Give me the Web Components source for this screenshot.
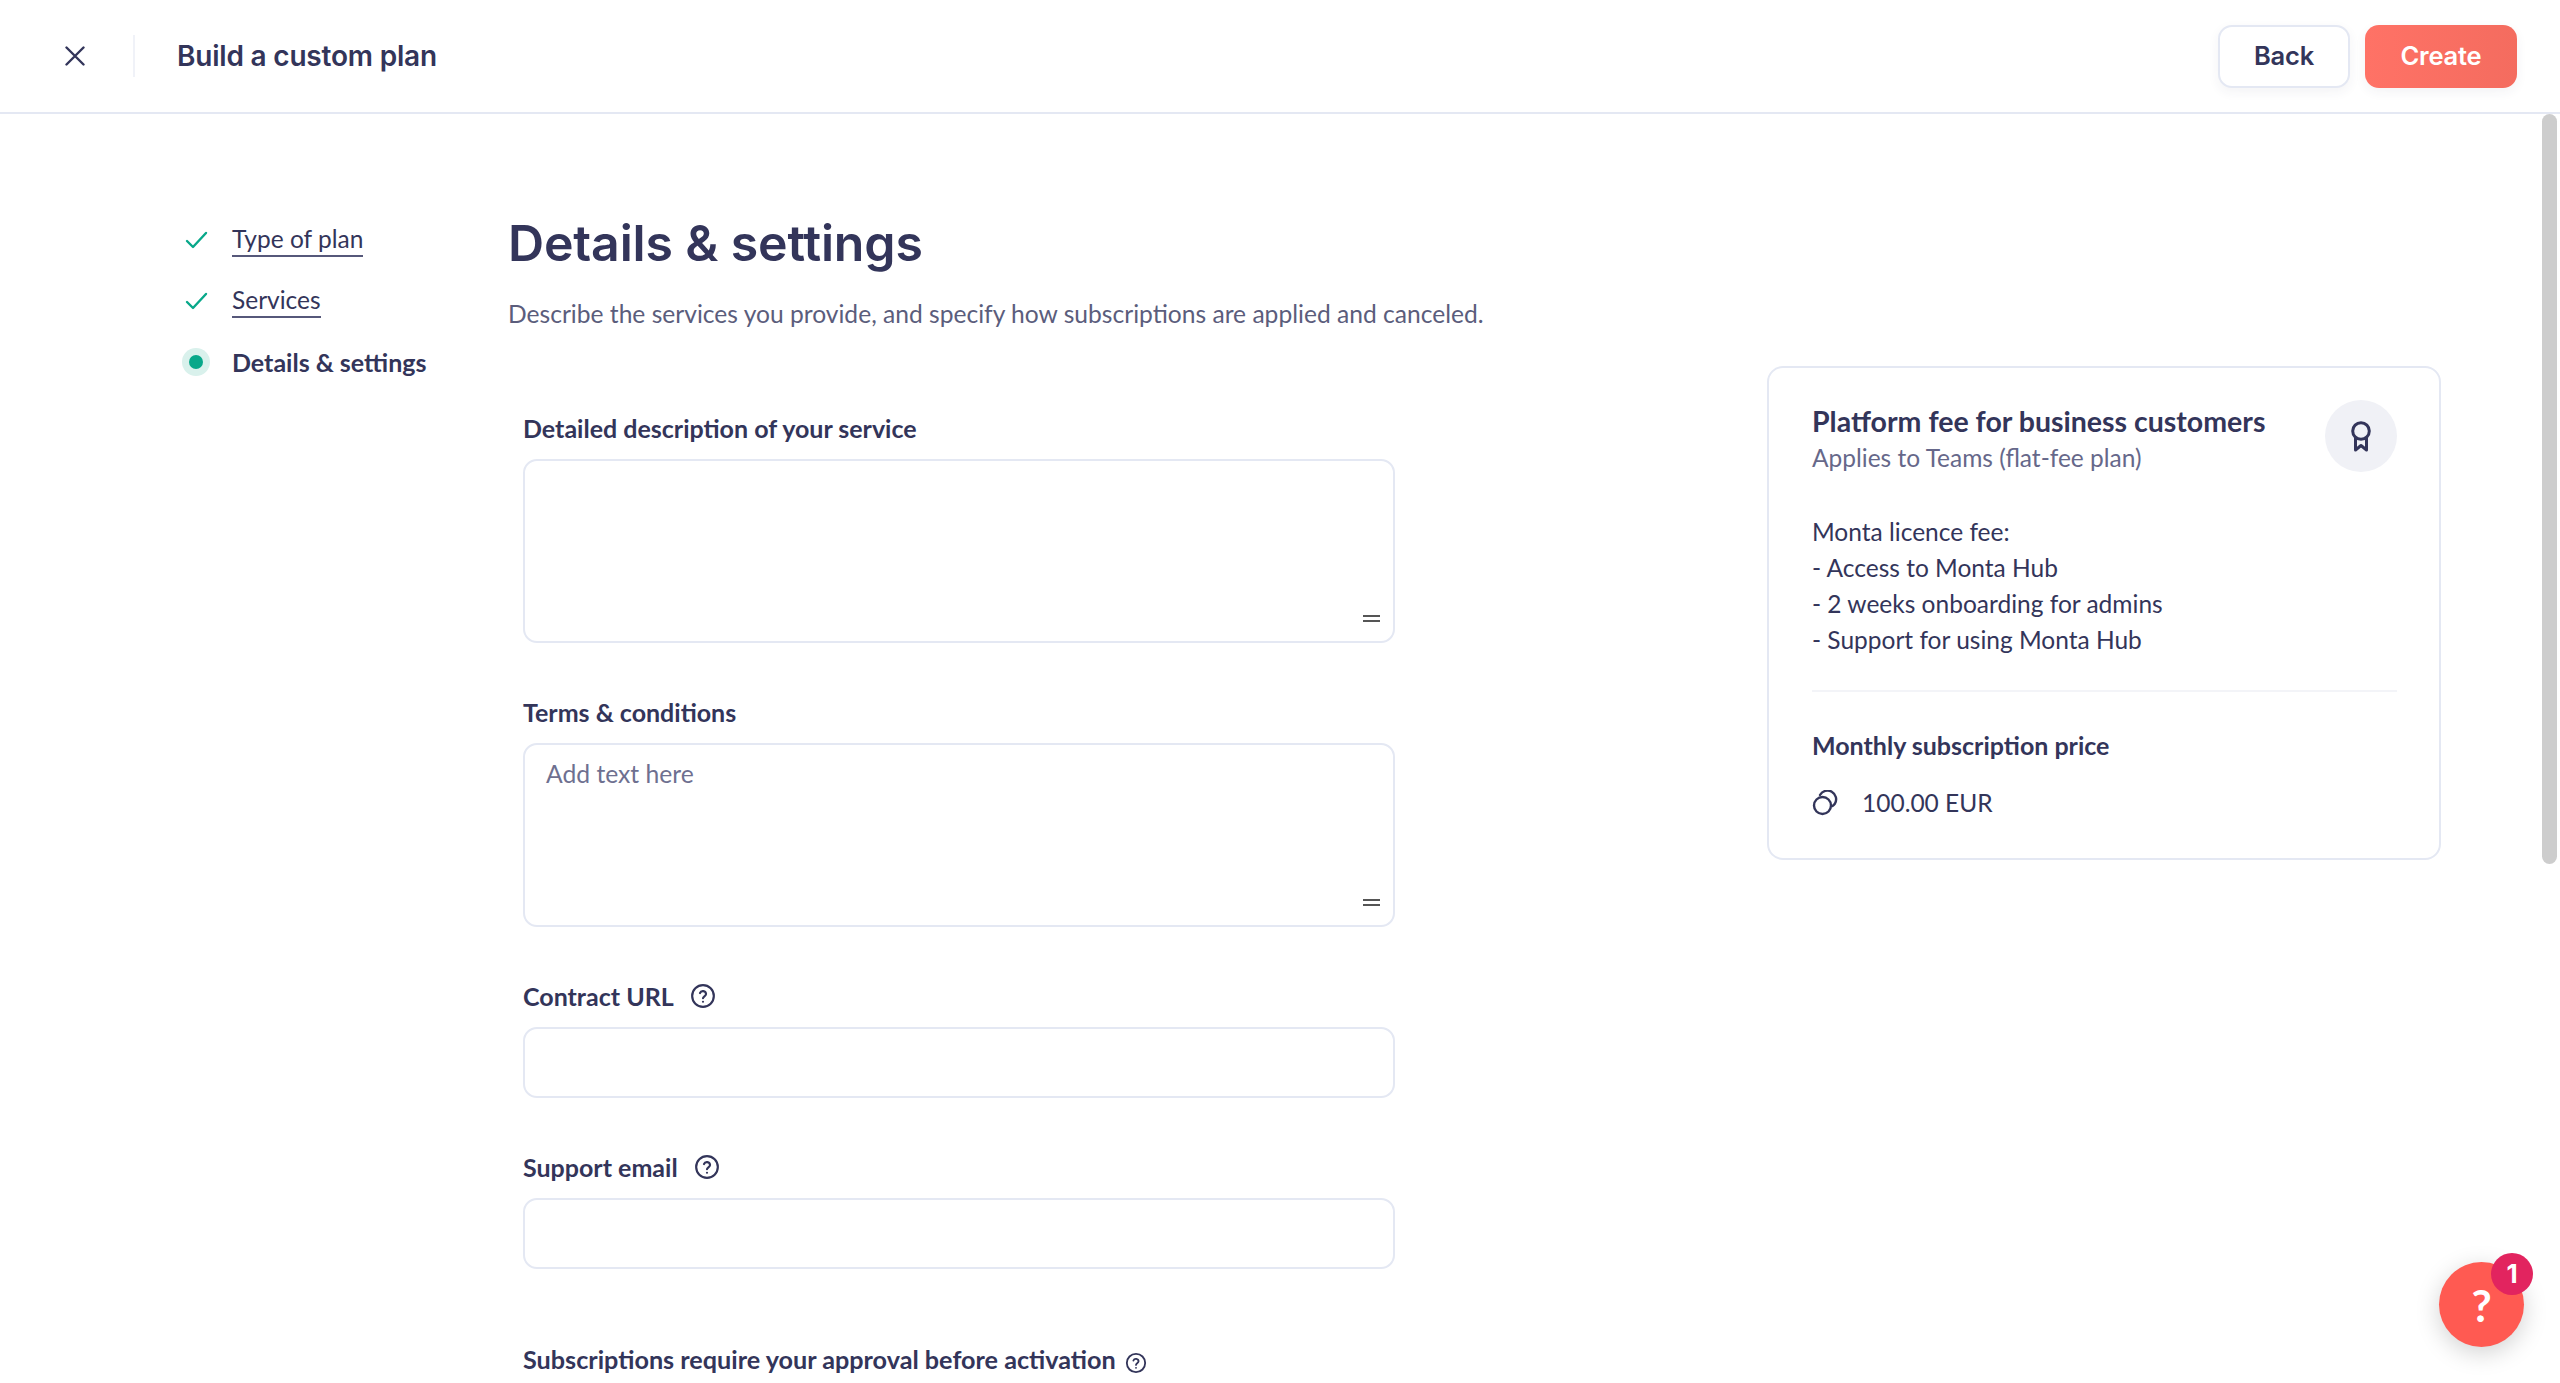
<!DOCTYPE html>
<html lang="en"><head><meta charset="utf-8"><title>Build a custom plan</title>
<style>
html,body{margin:0;height:100%;overflow:hidden;background:#fff}
body{font-family:Lato,"Liberation Sans",sans-serif;color:#33355a}
</style></head><body>
<plan-app></plan-app>
<script>
const Q='<svg viewBox="0 0 24 24" width="100%" height="100%" fill="none" stroke="currentColor" stroke-width="2" stroke-linecap="round" stroke-linejoin="round"><circle cx="12" cy="12" r="10"/><path d="M9.2 9.3a2.9 2.9 0 0 1 5.6.9c0 1.9-2.8 2.3-2.8 3.9"/><path d="M12 17.3h.01"/></svg>';
function def(name,css,html){
  customElements.define(name,class extends HTMLElement{
    constructor(){super();const r=this.attachShadow({mode:'open'});r.innerHTML='<style>'+css+'</style>'+(typeof html==='function'?html(this):html);}
  });
}
def('top-bar',`
:host{display:flex;align-items:center;height:112px;border-bottom:2px solid #e4e8f3;padding:0 43px 0 0;box-sizing:content-box;flex:none;background:#fff}
.x{width:135px;height:42px;display:flex;align-items:center;border-right:2px solid #f0f2f8;box-sizing:border-box;padding-left:65px}
h1{margin:0 0 0 42px;font:600 28px/36px Inter,sans-serif;letter-spacing:-.2px;color:#33355a;flex:1}
button{height:63px;border-radius:14px;font:600 25.5px Inter,sans-serif;letter-spacing:-.2px;box-sizing:border-box;padding:0 0 2px;box-shadow:0 4px 12px rgba(51,53,90,.06)}
.b{width:132px;border:2px solid #e4e8f3;background:#fff;color:#33355a;margin-right:15px}
.c{width:152px;border:0;background:linear-gradient(90deg,#ff7266,#f46c5f);color:#fff}
`,`<div class="x"><svg width="20" height="20" viewBox="0 0 20 20" fill="none" stroke="#33355a" stroke-width="2.4" stroke-linecap="round"><path d="M1.5 1.5l17 17M18.5 1.5l-17 17"/></svg></div>
<h1>Build a custom plan</h1><button class="b">Back</button><button class="c">Create</button>`);

def('step-item',`
:host{display:flex;align-items:center;height:38px;font:400 24.5px/38px Lato,sans-serif;color:#33355a}
.i{width:28px;height:28px;margin-right:22px;margin-left:-14px;flex:none;display:flex;align-items:center;justify-content:center}
.d{width:28px;height:28px;border-radius:50%;background:#d9f1ec;display:flex;align-items:center;justify-content:center}
.d i{display:block;width:14px;height:14px;border-radius:50%;background:#08a88a}
.t{line-height:32px;border-bottom:2px solid #56587a}
:host([active]) .t{border:0;font-weight:700;font-size:25px}
`,el=>`<div class="i">${el.hasAttribute('active')?'<div class="d"><i></i></div>':'<svg width="24" height="20" viewBox="0 0 24 20" fill="none" stroke="#08a88a" stroke-width="2.4" stroke-linecap="round" stroke-linejoin="round"><path d="M3 11l6 6L22 3"/></svg>'}</div><span class="t"><slot></slot></span>`);

def('step-nav',`
:host{display:flex;flex-direction:column;gap:23px;width:322px;padding:107px 0 0 196px;box-sizing:content-box;flex:none;margin-right:-10px}
`,`<slot></slot>`);

def('page-head',`
:host{display:block;margin:0 0 0 -15px;white-space:nowrap}
h2{margin:0;font:600 50px/62px Inter,sans-serif;letter-spacing:-.15px;color:#33355a}
p{margin:24px 0 0;font:400 24.6px/32px Lato,sans-serif;color:#5b5d7c}
`,`<h2><slot name="t"></slot></h2><p><slot name="s"></slot></p>`);

def('field-block',`
:host{display:block;width:872px;margin-bottom:53px}
.l{display:flex;align-items:center;height:32px;margin-bottom:15px;font:700 25px/32px Lato,sans-serif;color:#33355a}
.h{width:26px;height:26px;margin-left:16px;color:#33355a;display:none}
:host([help]) .h{display:block}
.w{position:relative;display:block}
textarea,input{display:block;width:100%;box-sizing:border-box;border:2px solid #e4e8f3;border-radius:14px;background:#fff;font:400 24.7px/32px Lato,sans-serif;color:#33355a;padding:13px 21px;outline:0;margin:0;resize:none}
textarea{height:184px}
input{height:71px}
::placeholder{color:#6e7090;opacity:1}
.r{position:absolute;right:15px;bottom:21px;width:17px;height:7px;border-top:2px solid #555;border-bottom:2px solid #555;box-sizing:border-box}
`,el=>{const ph=el.getAttribute('placeholder')||'';return `<div class="l"><slot></slot><span class="h">${Q}</span></div><div class="w">${el.hasAttribute('area')?`<textarea placeholder="${ph}"></textarea><span class="r"></span>`:'<input type="text">'}</div>`});

def('approval-row',`
:host{display:flex;align-items:center;height:32px;margin-top:74px;font:700 25.2px/32px Lato,sans-serif;color:#33355a}
.h{width:22px;height:22px;margin-left:9px;color:#33355a}
`,`<slot></slot><span class="h">${Q}</span>`);

def('plan-card',`
:host{display:block;width:674px;height:494px;box-sizing:border-box;border:2px solid #e4e8f3;border-radius:16px;padding:32px 42px 0 43px;flex:none;background:#fff}
.top{display:flex;justify-content:space-between}
h3{margin:4px 0 0;font:700 28.5px/34px Lato,sans-serif;color:#33355a}
.sub{margin-top:2px;font:400 24.5px/36px Lato,sans-serif;color:#66688a}
.ic{width:72px;height:72px;border-radius:50%;background:#f0f1f6;display:flex;align-items:center;justify-content:center;flex:none}
.body{margin:38px 0 0;font:400 24.5px/36px Lato,sans-serif;color:#33355a;padding-bottom:32px;border-bottom:2px solid #f3f4f8}
h4{margin:37px 0 0;font:700 25px/32px Lato,sans-serif;color:#33355a}
.p{display:flex;align-items:center;margin-top:26px;font:400 24.5px/32px Lato,sans-serif;color:#33355a}
.p svg{margin-right:24px}
`,`<div class="top"><div><h3>Platform fee for business customers</h3><div class="sub">Applies to Teams (flat-fee plan)</div></div>
<div class="ic"><svg width="24" height="32" viewBox="0 0 24 32" fill="none" stroke="#33355a" stroke-width="3" stroke-linejoin="round"><circle cx="12" cy="11" r="8.3"/><path d="M6.5 18v12l5.5-4.5 5.5 4.5V18"/></svg></div></div>
<div class="body">Monta licence fee:<br>- Access to Monta Hub<br>- 2 weeks onboarding for admins<br>- Support for using Monta Hub</div>
<h4>Monthly subscription price</h4>
<div class="p"><svg width="26" height="26" viewBox="0 0 26 26" fill="none" stroke="#33355a" stroke-width="2.4" stroke-linecap="round"><circle cx="10.5" cy="15.5" r="8.5"/><path d="M8 5a8.5 8.5 0 0 1 15 8.5 8 8 0 0 1-2.5 2.5"/></svg>100.00 EUR</div>`);

def('help-fab',`
:host{position:absolute;left:2439px;top:1262px;width:85px;height:85px;border-radius:50%;background:#ff5a52;box-shadow:0 6px 24px rgba(0,0,0,.18);display:flex;align-items:center;justify-content:center;color:#fff;font:700 44px/1 Lato,sans-serif}
.q{margin-top:1px}
.b{position:absolute;left:52px;top:-9px;width:42px;height:42px;border-radius:50%;background:#e2245f;font:700 26px/42px Inter,sans-serif;text-align:center}
`,`<span class="q">?</span><span class="b">1</span>`);

def('scroll-thumb',`
:host{position:absolute;left:2542px;top:114px;width:15px;height:750px;border-radius:8px;background:#cdcdcd}
`,``);

def('plan-app',`
:host{display:flex;flex-direction:column;height:1383px;overflow:hidden;position:relative}
.main{display:flex;flex:1;min-height:0}
.col{width:872px;padding:98px 0 0 15px;flex:none}
.form{margin-top:82px}
.card{padding:252px 0 0 372px}
`,`<top-bar></top-bar>
<div class="main">
<step-nav><step-item>Type of plan</step-item><step-item>Services</step-item><step-item active>Details &amp; settings</step-item></step-nav>
<div class="col">
<page-head><span slot="t">Details &amp; settings</span><span slot="s">Describe the services you provide, and specify how subscriptions are applied and canceled.</span></page-head>
<div class="form">
<field-block area>Detailed description of your service</field-block>
<field-block area placeholder="Add text here">Terms &amp; conditions</field-block>
<field-block help>Contract URL</field-block>
<field-block help>Support email</field-block>
<approval-row>Subscriptions require your approval before activation</approval-row>
</div></div>
<div class="card"><plan-card></plan-card></div>
</div>
<scroll-thumb></scroll-thumb><help-fab></help-fab>`);
</script>
</body></html>
